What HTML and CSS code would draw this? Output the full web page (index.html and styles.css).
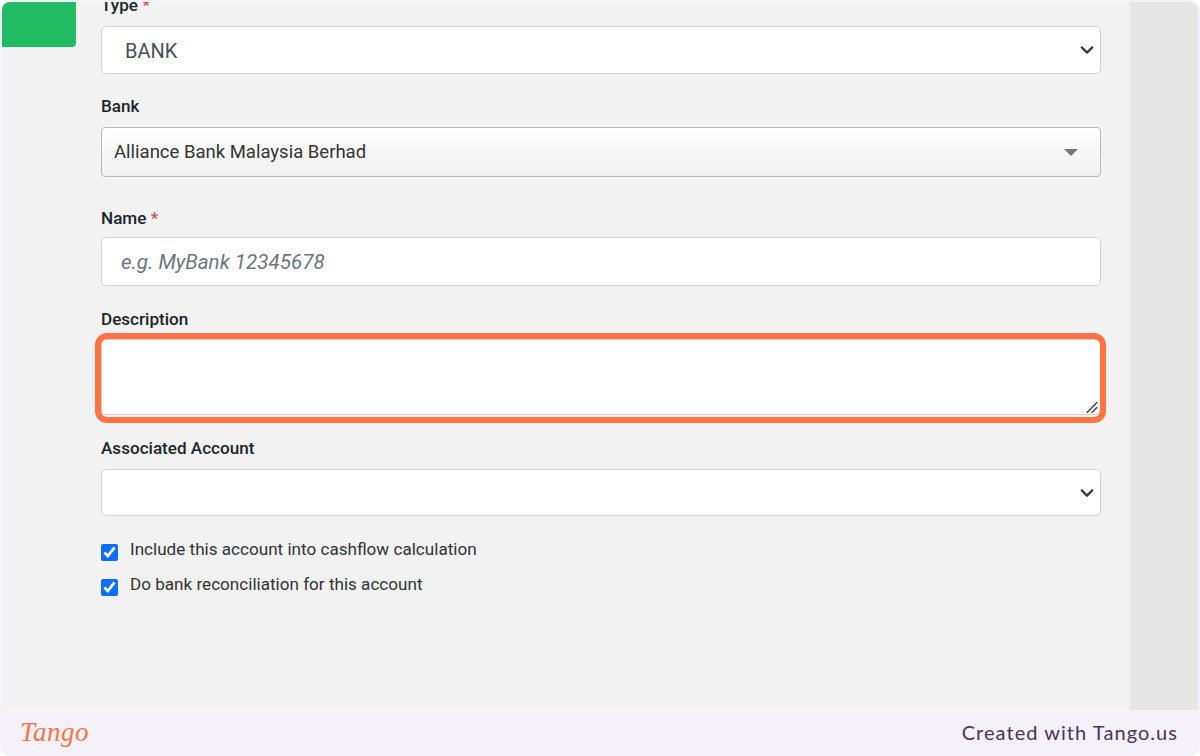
FILE: index.html
```html
<!DOCTYPE html>
<html lang="en">
<head>
<meta charset="utf-8">
<title>Add bank account</title>
<link rel="stylesheet" href="styles.css">
</head>
<body>
<div class="frame">
  <div class="shot">
    <main class="main">
      <div class="rail"><div class="green-btn"></div></div>
      <form class="form">
        <div class="field type-field">
          <label class="label">Type <span class="req">*</span></label>
          <select class="control select select-type"><option>BANK</option></select>
        </div>
        <div class="field bank-field">
          <label class="label">Bank</label>
          <div class="select2"><span>Alliance Bank Malaysia Berhad</span><i class="caret"></i></div>
        </div>
        <div class="field name-field">
          <label class="label">Name <span class="req">*</span></label>
          <input class="control input" placeholder="e.g. MyBank 12345678">
        </div>
        <div class="field desc-field">
          <label class="label">Description</label>
          <div class="desc-wrap">
            <textarea class="control textarea"></textarea>
            <svg class="grip" width="12" height="12" viewBox="0 0 12 12"><path d="M1 11.5 11 1.5M6 11.5l5-5" fill="none" stroke="#333" stroke-width="1.2" stroke-linecap="round"/></svg>
            <div class="ring"></div>
          </div>
        </div>
        <div class="field assoc-field">
          <label class="label">Associated Account</label>
          <select class="control select select-assoc"><option></option></select>
        </div>
        <label class="check check-first"><input type="checkbox" checked><span>Include this account into cashflow calculation</span></label>
        <label class="check"><input type="checkbox" checked><span>Do bank reconciliation for this account</span></label>
      </form>
    </main>
    <aside class="gutter"></aside>
  </div>
  <footer class="footer">
    <span class="logo">Tango</span>
    <span class="credit">Created with Tango.us</span>
  </footer>
</div>
</body>
</html>
```
FILE: styles.css
```css
* { box-sizing: border-box; }
html, body { margin: 0; height: 100%; }
body { background: #fff; font-family: Roboto, "Liberation Sans", sans-serif; overflow: hidden; }
.frame { width: 1200px; height: 756px; background: #f4f2f8; border-radius: 10px; padding: 2px 2px 0; display: flex; flex-direction: column; }
.shot { height: 708px; display: flex; overflow: hidden; border-radius: 8px 8px 0 0; }
.main { width: 1128px; background: #f2f2f2; display: flex; overflow: hidden; }
.gutter { flex: 1; background: #e6e6e6; }
.rail { width: 99px; flex: none; }
.green-btn { width: 74px; height: 45px; background: #21bb63; border-radius: 0 0 4px 0; }
.form { width: 1000px; flex: none; margin-top: -6px; display: flex; flex-direction: column; }
.label { display: block; font-size: 17.1px; font-weight: 500; line-height: 19px; color: #212529; }
.req { color: #e5484d; }
.field { display: flex; flex-direction: column; }
.control { display: block; width: 100%; font-family: Roboto, "Liberation Sans", sans-serif; background-color: #fff; border: 1px solid #d2d2d2; border-radius: 5px; outline: none; }
.select { appearance: none; -webkit-appearance: none; height: 48px; font-size: 20px; color: #495057; padding: 2px 40px 0 23px; background-image: url("data:image/svg+xml,%3Csvg xmlns='http://www.w3.org/2000/svg' viewBox='0 0 16 16'%3E%3Cpath fill='none' stroke='%23343a40' stroke-linecap='round' stroke-linejoin='round' stroke-width='2.6' d='m2 5 6 6 6-6'/%3E%3C/svg%3E"); background-repeat: no-repeat; background-position: right 5px center; background-size: 16px 14px; }
.type-field .label { margin-bottom: 11px; }
.select-assoc { height: 47px; }
.bank-field { margin-top: 23px; }
.bank-field .label { margin-bottom: 11px; }
.select2 { height: 50px; display: flex; align-items: center; justify-content: space-between; padding: 0 22px 0 12px; border: 1px solid #b9b9b9; border-radius: 4px; font-size: 18.5px; color: #333; background: linear-gradient(#fff, #f0f0f0); }
.caret { width: 0; height: 0; border-left: 7px solid transparent; border-right: 7px solid transparent; border-top: 7px solid #777; }
.name-field { margin-top: 32px; }
.name-field .label { margin-bottom: 9px; }
.input { height: 49px; font-size: 20.6px; padding: 0 19px; color: #495057; }
.input::placeholder { color: #6c757d; font-style: italic; opacity: 1; }
.desc-field { margin-top: 24px; }
.desc-field .label { margin-bottom: 10px; }
.desc-wrap { position: relative; height: 79px; }
.textarea { height: 76px; resize: none; }
.grip { position: absolute; right: 3px; bottom: 5px; pointer-events: none; }
.ring { position: absolute; left: -6px; right: -5px; top: -6px; bottom: -5px; border: 6px solid #ff7343; border-radius: 12px; pointer-events: none; }
.assoc-field { margin-top: 21px; }
.assoc-field .label { margin-bottom: 11px; }
.check { display: flex; align-items: flex-start; gap: 12px; font-size: 17.1px; line-height: 24px; color: #333; height: 35px; }
.check input { width: 17px; height: 17px; margin: 7px 0 0; accent-color: #0d6efd; flex: none; }
.check-first { margin-top: 21px; }
.footer { flex: 1; display: flex; align-items: center; justify-content: space-between; padding: 0 20px 2px 18px; }
.logo { font-family: "Liberation Serif", serif; font-style: italic; font-size: 27px; color: #ff7343; letter-spacing: 0.5px; }
.credit { font-family: Lato, sans-serif; font-size: 20px; letter-spacing: 1.05px; color: #46355f; }
```
